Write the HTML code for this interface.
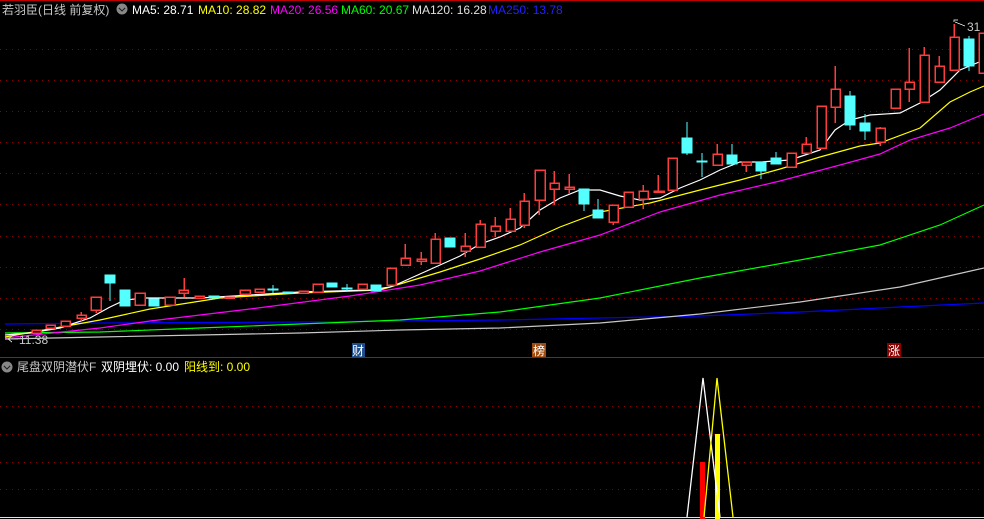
<!DOCTYPE html>
<html><head><meta charset="utf-8"><style>
html,body{margin:0;padding:0;background:#000;width:984px;height:519px;overflow:hidden}
svg{display:block}
text{font-family:"Liberation Sans","Noto Sans CJK SC",sans-serif;font-size:12px}
</style></head><body>
<svg width="984" height="519" viewBox="0 0 984 519" xmlns="http://www.w3.org/2000/svg" shape-rendering="crispEdges">
<rect width="984" height="519" fill="#000"/>
<line x1="0" y1="0.5" x2="984" y2="0.5" stroke="#c00000"/>
<g stroke="#8a0000" stroke-dasharray="1,5">
<line x1="0" y1="49.5" x2="984" y2="49.5"/><line x1="0" y1="80.5" x2="984" y2="80.5"/>
<line x1="0" y1="111.5" x2="984" y2="111.5"/><line x1="0" y1="142.5" x2="984" y2="142.5"/>
<line x1="0" y1="173.5" x2="984" y2="173.5"/><line x1="0" y1="204.5" x2="984" y2="204.5"/>
<line x1="0" y1="236.5" x2="984" y2="236.5"/><line x1="0" y1="267.5" x2="984" y2="267.5"/>
<line x1="0" y1="298.5" x2="984" y2="298.5"/><line x1="0" y1="329.5" x2="984" y2="329.5"/>
<line x1="0" y1="406.5" x2="984" y2="406.5"/><line x1="0" y1="434.5" x2="984" y2="434.5"/>
<line x1="0" y1="462.5" x2="984" y2="462.5"/><line x1="0" y1="489.5" x2="984" y2="489.5"/>
</g>
<g fill="none" stroke-width="1.2" shape-rendering="auto">
<polyline stroke="#0000ff" points="5,324 100,323 300,322 500,320 700,316 800,312 900,307 984,303"/>
<polyline stroke="#c8c8c8" points="5,339 100,337 200,335 300,333 400,330 500,328 600,323 700,314 800,302 900,287 984,268"/>
<polyline stroke="#00ff00" points="5,333 100,332 200,328 300,324 400,320 500,312 600,298 700,278 800,260 880,245 940,225 984,205"/>
<polyline stroke="#ff00ff" points="5,338 100,328 150,321 250,309 350,296 420,285 480,271 540,252 600,235 660,212 720,195 780,181 840,165 880,154 910,140 950,128 984,114"/>
<polyline stroke="#ffff00" points="5,337 100,320 150,309 220,298 300,293 380,290 400,284 440,272 480,259 520,245 560,227 600,212 650,203 700,190 740,180 780,169 820,157 860,146 880,143 920,128 950,102 970,92 984,86"/>
<polyline stroke="#ffffff" points="5,335 30,333 60,328 90,318 110,307 125,300 145,298 200,298 300,292 370,290 390,287 400,283 420,274 440,265 460,256 480,244 500,237 520,228 540,210 560,198 580,190 600,190 620,196 640,200 660,198 680,188 700,180 720,170 740,162 760,162 790,160 805,155 820,150 835,130 850,120 870,115 900,113 920,103 940,90 960,70 984,60"/>
</g>
<g stroke="#ff3c3c" fill="#000" stroke-width="1.5">
<rect x="32" y="330" width="9" height="3"/>
<rect x="46" y="325" width="9" height="3"/>
<rect x="61" y="321" width="9" height="5"/>
<line x1="81" y1="312" x2="81" y2="321"/><rect x="77" y="315" width="9" height="3"/>
<line x1="96" y1="310" x2="96" y2="313"/><rect x="91" y="297" width="10" height="13"/>
<rect x="135" y="293" width="10" height="12"/>
<rect x="165" y="297" width="10" height="8"/>
<line x1="184" y1="278" x2="184" y2="297"/><rect x="179" y="290" width="9" height="3"/>
<rect x="195" y="296" width="9" height="2"/>
<rect x="225" y="297" width="9" height="1"/>
<rect x="240" y="290" width="10" height="4"/>
<rect x="255" y="289" width="9" height="3"/>
<rect x="299" y="291" width="9" height="2"/>
<rect x="313" y="284" width="10" height="8"/>
<rect x="358" y="284" width="9" height="5"/>
<rect x="387" y="268" width="9" height="17"/>
<line x1="405" y1="244" x2="405" y2="265"/><rect x="401" y="258" width="9" height="7"/>
<line x1="421" y1="252" x2="421" y2="265"/><rect x="417" y="259" width="9" height="2"/>
<line x1="435" y1="233" x2="435" y2="239"/><rect x="431" y="239" width="9" height="24"/>
<line x1="465" y1="233" x2="465" y2="257"/><rect x="461" y="246" width="9" height="5"/>
<line x1="480" y1="220" x2="480" y2="224"/><rect x="476" y="224" width="9" height="23"/>
<line x1="495" y1="217" x2="495" y2="237"/><rect x="491" y="226" width="9" height="5"/>
<line x1="510" y1="208" x2="510" y2="219"/><rect x="506" y="219" width="9" height="12"/>
<line x1="524" y1="193" x2="524" y2="228"/><rect x="520" y="201" width="9" height="24"/>
<line x1="539" y1="200" x2="539" y2="215"/><rect x="535" y="170" width="10" height="30"/>
<line x1="554" y1="171" x2="554" y2="205"/><rect x="550" y="183" width="9" height="6"/>
<line x1="569" y1="174" x2="569" y2="194"/><rect x="565" y="187" width="9" height="2"/>
<line x1="613" y1="222" x2="613" y2="225"/><rect x="609" y="205" width="9" height="17"/>
<rect x="624" y="192" width="9" height="15"/>
<line x1="643" y1="185" x2="643" y2="209"/><rect x="639" y="191" width="9" height="8"/>
<line x1="658" y1="175" x2="658" y2="192"/><rect x="654" y="191" width="10" height="1"/>
<rect x="668" y="158" width="9" height="32"/>
<line x1="717" y1="144" x2="717" y2="154"/><rect x="713" y="154" width="9" height="11"/>
<line x1="746" y1="165" x2="746" y2="172"/><rect x="742" y="162" width="9" height="3"/>
<rect x="787" y="153" width="9" height="14"/>
<line x1="806" y1="137" x2="806" y2="144"/><rect x="802" y="144" width="9" height="9"/>
<rect x="817" y="106" width="9" height="42"/>
<line x1="835" y1="66" x2="835" y2="123"/><rect x="831" y="89" width="9" height="18"/>
<line x1="880" y1="127" x2="880" y2="146"/><rect x="876" y="128" width="9" height="14"/>
<rect x="891" y="89" width="9" height="19"/>
<line x1="909" y1="48" x2="909" y2="102"/><rect x="905" y="82" width="9" height="7"/>
<line x1="924" y1="47" x2="924" y2="55"/><rect x="920" y="55" width="9" height="47"/>
<line x1="939" y1="56" x2="939" y2="66"/><rect x="935" y="66" width="9" height="16"/>
<line x1="954" y1="24" x2="954" y2="37"/><rect x="950" y="37" width="9" height="33"/>
<rect x="979" y="33" width="10" height="40"/>
</g>
<g stroke="#54ffff" fill="#54ffff" stroke-width="1">
<line x1="110" y1="283" x2="110" y2="301"/><rect x="105" y="275" width="10" height="8"/>
<rect x="120" y="290" width="10" height="16"/>
<rect x="149" y="299" width="10" height="7"/>
<rect x="209" y="296" width="10" height="2"/>
<line x1="273" y1="285" x2="273" y2="293"/><rect x="268" y="289" width="10" height="1"/>
<rect x="283" y="292" width="10" height="1"/>
<rect x="327" y="283" width="10" height="4"/>
<line x1="347" y1="284" x2="347" y2="292"/><rect x="342" y="288" width="10" height="1"/>
<rect x="371" y="285" width="10" height="6"/>
<rect x="445" y="238" width="10" height="9"/>
<line x1="584" y1="204" x2="584" y2="211"/><rect x="579" y="189" width="10" height="15"/>
<line x1="598" y1="199" x2="598" y2="210"/><rect x="593" y="210" width="10" height="8"/>
<line x1="687" y1="122" x2="687" y2="155"/><rect x="682" y="138" width="10" height="15"/>
<line x1="702" y1="153" x2="702" y2="177"/><rect x="697" y="161" width="10" height="1"/>
<line x1="732" y1="144" x2="732" y2="166"/><rect x="727" y="155" width="10" height="9"/>
<line x1="761" y1="171" x2="761" y2="179"/><rect x="756" y="162" width="10" height="9"/>
<line x1="776" y1="152" x2="776" y2="158"/><rect x="771" y="158" width="10" height="6"/>
<line x1="850" y1="91" x2="850" y2="130"/><rect x="845" y="96" width="10" height="29"/>
<line x1="865" y1="114" x2="865" y2="140"/><rect x="860" y="123" width="10" height="8"/>
<line x1="969" y1="36" x2="969" y2="71"/><rect x="964" y="39" width="10" height="27"/>
</g>
<polyline points="954,22 954,20 958,20" fill="none" stroke="#c8c8c8"/>
<line x1="955" y1="22" x2="965" y2="26" stroke="#c8c8c8"/>
<text x="967" y="31" fill="#c8c8c8">31</text>
<polyline points="12,336 8,339 12,342" fill="none" stroke="#c8c8c8"/>
<line x1="8" y1="339" x2="18" y2="339" stroke="#c8c8c8"/>
<text x="19" y="344" fill="#c8c8c8">11.38</text>
<rect x="352" y="343" width="13" height="14" fill="#1c4c8c"/><text x="352" y="355" fill="#fff">财</text>
<rect x="532" y="343" width="14" height="14" fill="#a04c10"/><text x="533" y="355" fill="#fff">榜</text>
<rect x="887" y="343" width="14" height="14" fill="#8c0000"/><text x="888" y="355" fill="#fff">涨</text>
<line x1="0" y1="357.5" x2="984" y2="357.5" stroke="#d00000"/>
<text x="2" y="14" fill="#c8c8c8" font-size="13">若羽臣(日线 前复权)</text>
<circle cx="122" cy="9" r="5.5" fill="#888" shape-rendering="auto"/><polyline points="119,8 122,11 125,8" fill="none" stroke="#222" stroke-width="1.3"/>
<text x="132" y="14" fill="#fff">MA5: 28.71</text>
<text x="198" y="14" fill="#ffff00">MA10: 28.82</text>
<text x="270" y="14" fill="#ff00ff">MA20: 26.56</text>
<text x="341" y="14" fill="#00ff00">MA60: 20.67</text>
<text x="412" y="14" fill="#e0e0e0">MA120: 16.28</text>
<text x="488" y="14" fill="#2020ff">MA250: 13.78</text>
<circle cx="7" cy="367" r="5.5" fill="#888" shape-rendering="auto"/><polyline points="4,366 7,369 10,366" fill="none" stroke="#222" stroke-width="1.3"/>
<text x="17" y="371" fill="#c8c8c8" font-size="12">尾盘双阴潜伏F</text>
<text x="101" y="371" fill="#fff">双阴埋伏: 0.00</text>
<text x="184" y="371" fill="#ffff00">阳线到: 0.00</text>
<line x1="0" y1="517.5" x2="984" y2="517.5" stroke="#ffff00"/>
<rect x="700" y="462" width="5" height="57" fill="#ff0000"/>
<rect x="715" y="434" width="5" height="85" fill="#ffff00"/>
<polyline points="687,517 703,378 720,517" fill="none" stroke="#fff" stroke-width="1.3" shape-rendering="auto"/>
<polyline points="704,517 717,378 733,517" fill="none" stroke="#ffff00" stroke-width="1.3" shape-rendering="auto"/>
</svg>
</body></html>
